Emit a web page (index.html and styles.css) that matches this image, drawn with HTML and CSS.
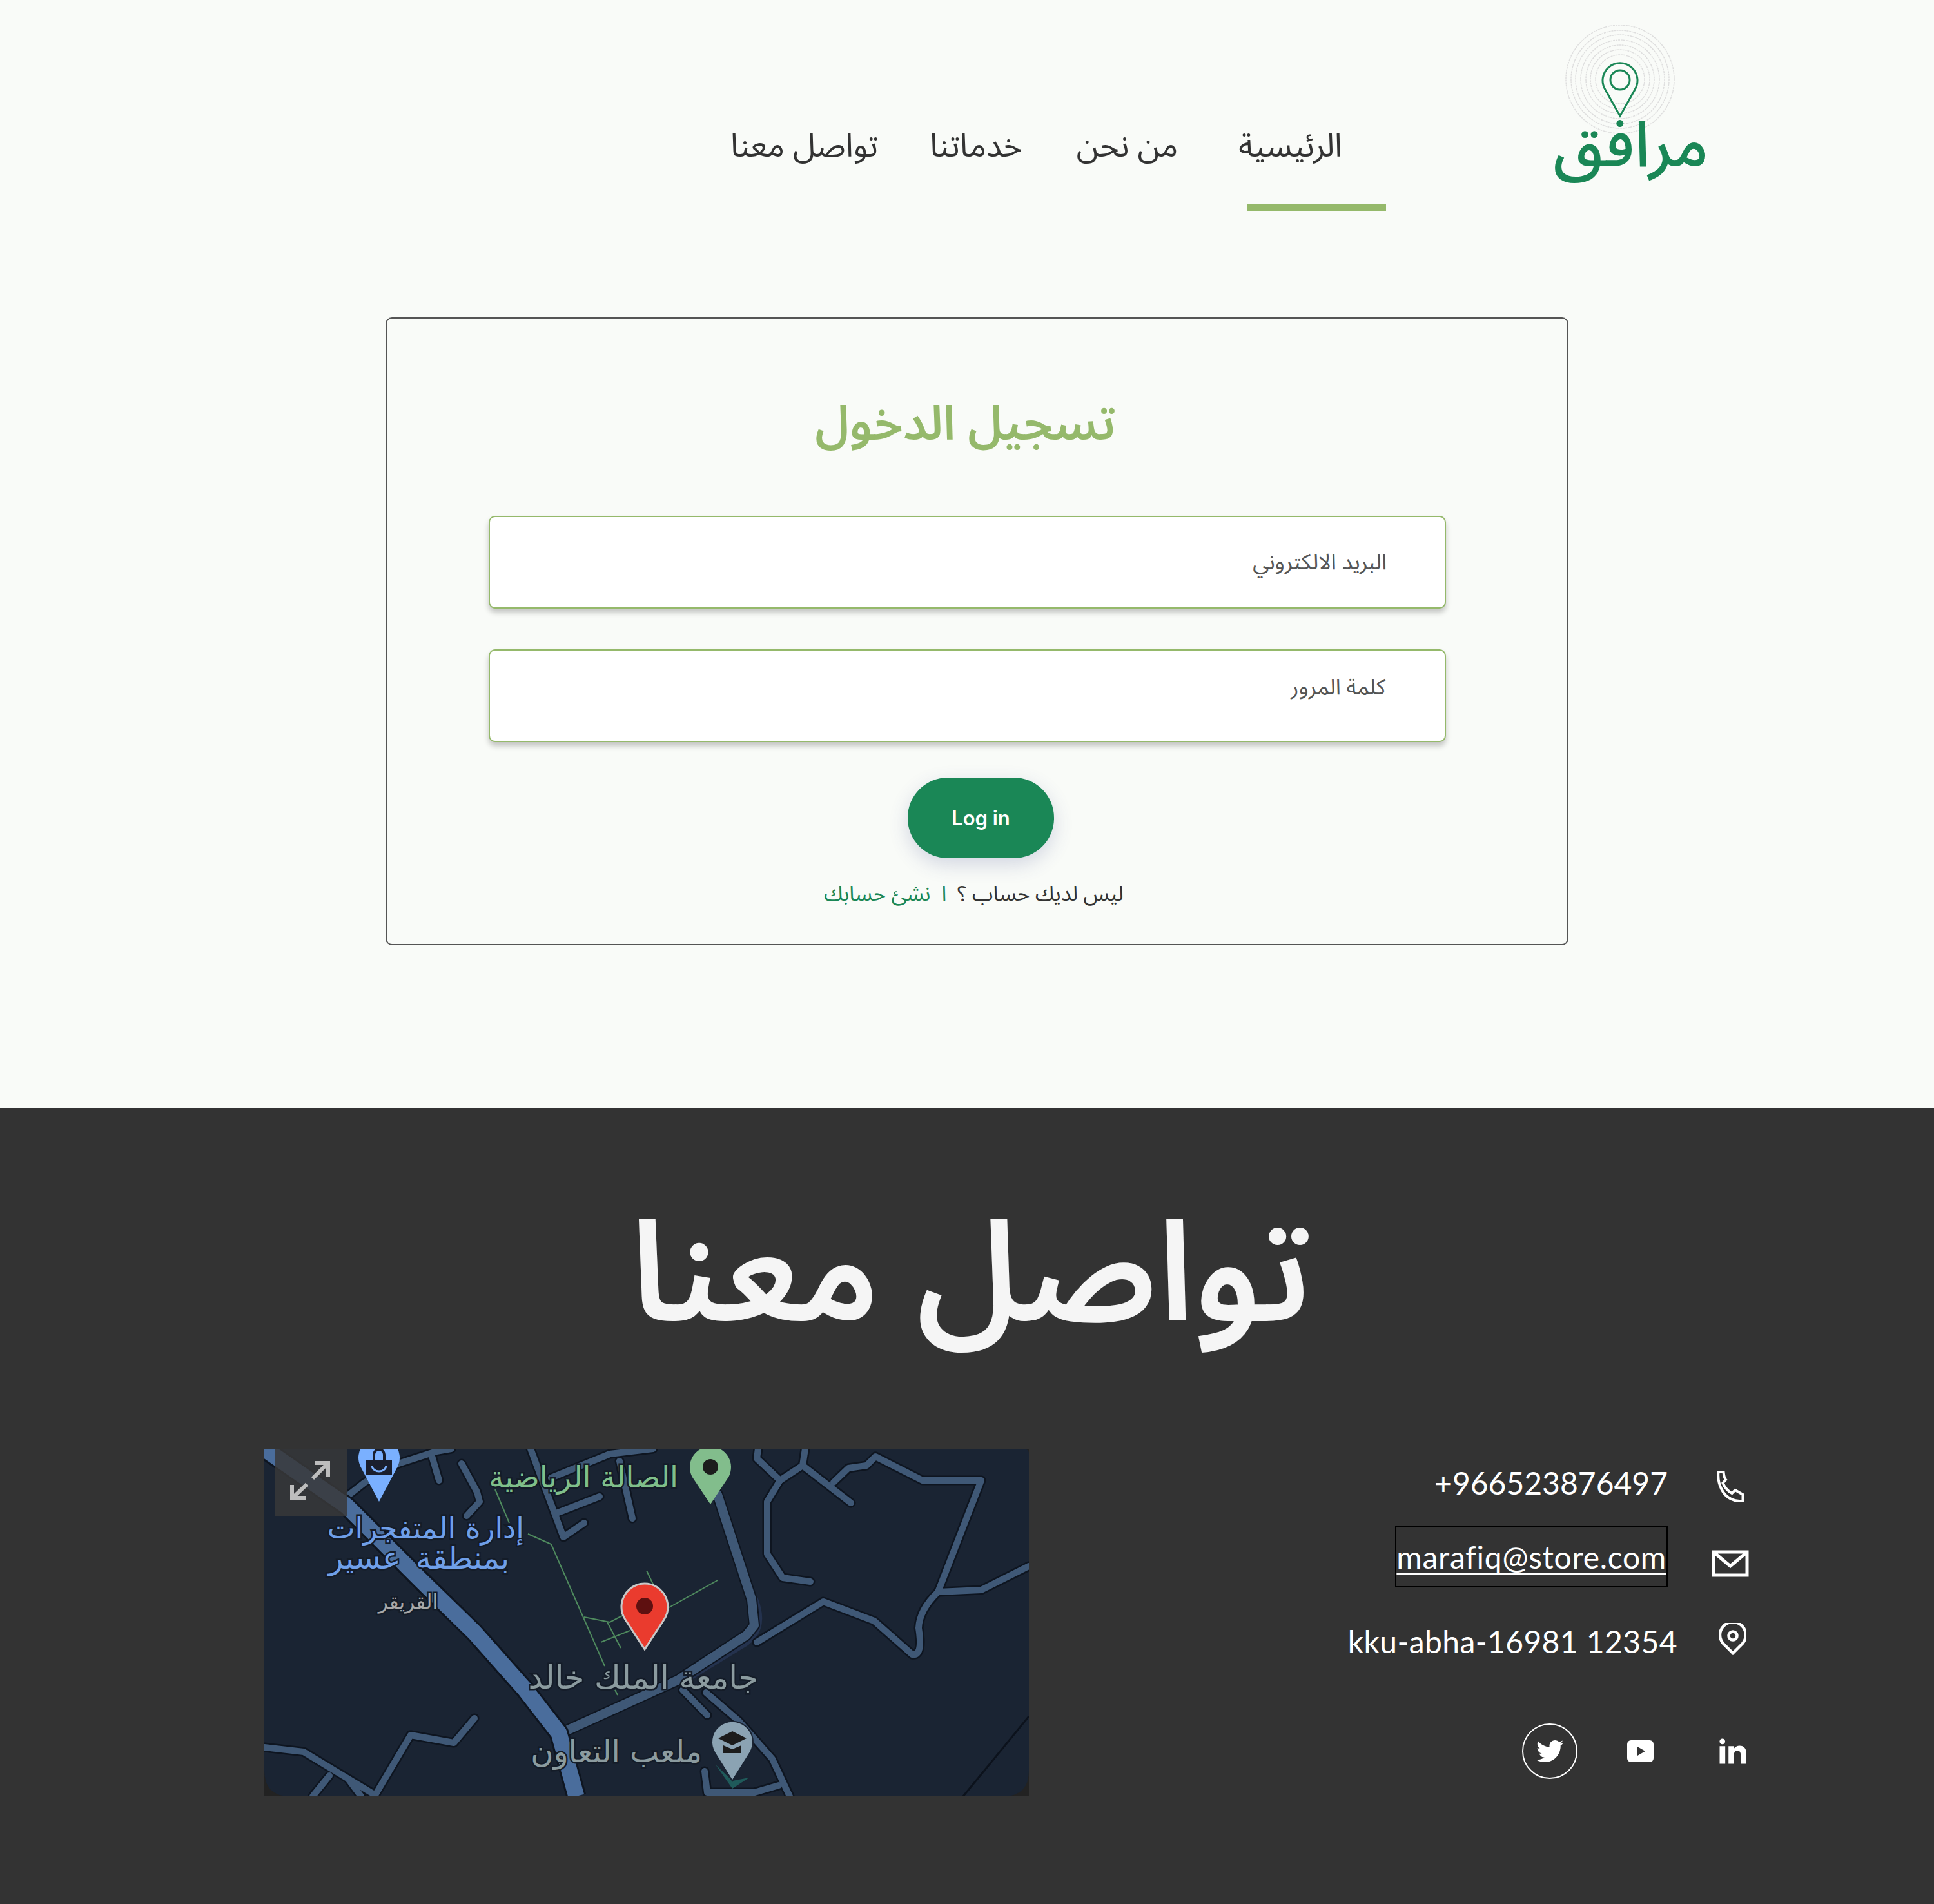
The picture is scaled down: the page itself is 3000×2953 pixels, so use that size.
FILE: index.html
```html
<!DOCTYPE html>
<html lang="ar" dir="rtl">
<head>
<meta charset="utf-8">
<title>مرافق</title>
<link rel="stylesheet" href="styles.css">
</head>
<body>
<header class="site-header">
  <a class="logo" href="#">
    <svg class="logo-mark" viewBox="0 0 170 170" aria-hidden="true">
      <g class="rings">
        <circle cx="85" cy="85" r="84"/><circle cx="85" cy="85" r="76"/><circle cx="85" cy="85" r="69"/>
        <circle cx="85" cy="85" r="61"/><circle cx="85" cy="85" r="53"/><circle cx="85" cy="85" r="46"/>
        <circle cx="85" cy="85" r="38"/>
      </g>
      <path class="pin" d="M85 142 L62 101 A27 27 0 1 1 108 101 Z"/>
      <circle class="pin" cx="85" cy="86" r="15"/>
    </svg>
    <span class="logo-text">مرافق</span>
  </a>
  <nav class="nav">
    <a class="nav-item is-active" href="#">الرئيسية</a>
    <a class="nav-item" href="#">من نحن</a>
    <a class="nav-item" href="#">خدماتنا</a>
    <a class="nav-item" href="#">تواصل معنا</a>
  </nav>
</header>

<main class="main">
  <form class="card">
    <h1 class="card-title">تسجيل الدخول</h1>
    <div class="field"><span class="field-label">البريد الالكتروني</span></div>
    <div class="field field-second"><span class="field-label">كلمة المرور</span></div>
    <button class="btn" type="button" dir="ltr">Log in</button>
    <p class="signup">ليس لديك حساب ؟ &nbsp;<a href="#">ا&nbsp; نشئ حسابك</a></p>
  </form>
</main>

<footer class="footer">
  <h2 class="footer-title">تواصل معنا</h2>
  <div class="footer-body">
    <div class="contact">
      <div class="contact-row">
        <span class="ico-cell"><svg class="ico ico-phone" viewBox="0 0 44 50"><path d="M3 3H11C11.500 8 12 12 14.500 15L10 20C12 26 18 33 24 36L29 31L41 38V48C28 49 15 44 8 30C4 22 2 12 3 3Z"/></svg></span>
        <span class="contact-text contact-phone" dir="ltr">+966523876497</span>
      </div>
      <div class="contact-row">
        <span class="ico-cell"><svg class="ico ico-mail" viewBox="0 0 58 42"><path d="M3 3H55V39H3ZM4 4L29 25L54 4"/></svg></span>
        <a class="contact-text contact-mail" dir="ltr" href="#">marafiq@store.com</a>
      </div>
      <div class="contact-row">
        <span class="ico-cell"><svg class="ico ico-loc" viewBox="0 0 42 50"><path d="M21 47L6 32A20 20 0 1 1 36 32Z"/><circle cx="21" cy="20" r="6.500"/></svg></span>
        <span class="contact-text contact-addr" dir="ltr">kku-abha-16981 12354</span>
      </div>
      <div class="social">
        <svg class="soc soc-in" viewBox="0 0 24 24"><path d="M6.940 5a2 2 0 1 1-4-.002 2 2 0 0 1 4 .002zM7 8.480H3V21h4V8.480zm6.320 0H9.340V21h3.940v-6.570c0-3.660 4.770-4 4.770 0V21H22v-7.930c0-6.170-7.060-5.940-8.720-2.910l.040-1.680z"/></svg>
        <svg class="soc soc-yt" viewBox="0 0 41 34"><path fill-rule="evenodd" d="M6 0H35A6 6 0 0 1 41 6V28A6 6 0 0 1 35 34H6A6 6 0 0 1 0 28V6A6 6 0 0 1 6 0ZM16 10V24L28 17Z"/></svg>
        <span class="soc-circle"><svg class="soc soc-tw" viewBox="0 0 512 512"><path d="M459.370 151.716c.325 4.548.325 9.097.325 13.645 0 138.720-105.583 298.558-298.558 298.558-59.452 0-114.680-17.219-161.137-47.106 8.447.974 16.568 1.299 25.340 1.299 49.055 0 94.213-16.568 130.274-44.832-46.132-.975-84.792-31.188-98.112-72.772 6.498.974 12.995 1.624 19.818 1.624 9.421 0 18.843-1.300 27.614-3.573-48.081-9.747-84.143-51.980-84.143-102.985v-1.299c13.969 7.797 30.214 12.670 47.431 13.319-28.264-18.843-46.781-51.005-46.781-87.391 0-19.492 5.197-37.360 14.294-52.954 51.655 63.675 129.300 105.258 216.365 109.807-1.624-7.797-2.599-15.918-2.599-24.040 0-57.828 46.782-104.934 104.934-104.934 30.213 0 57.502 12.670 76.670 33.137 23.715-4.548 46.456-13.320 66.599-25.340-7.798 23.715-24.366 43.858-46.132 56.853 21.117-2.274 41.584-8.122 60.426-16.243-14.292 20.791-32.161 39.308-52.628 54.253z"/></svg></span>
      </div>
    </div>
    <svg class="map" viewBox="0 0 1186 539" dir="rtl">
      <defs>
        <g id="roads2">
          <path d="M764 300L867 237L946 267L1005 319Q1022 322 1015 278Q1016 250 1045 222L1112 219L1186 182"/>
          <path d="M1045 222L1112 49L1021 49L948 12L934 26L906 30L883 52"/>
          <path d="M766 0L764 15L800 49L780 82L780 163L804 200L847 206"/>
          <path d="M800 49L835 26L910 84M835 26L839 0"/>
          <path d="M649 374L687 413M685 378L736 422L788 481L815 539"/>
          <path d="M683 500L687 533L760 533L798 522M740 539L798 522"/>
          <path d="M128 74L156 52L208 23L267 4L290 0M259 8L271 49"/>
          <path d="M306 23L330 67L334 82L314 104"/>
          <path d="M413 0L464 137L496 115M453 100L520 74"/>
          <path d="M445 45L536 8L603 0M551 19L571 108"/>
          <path d="M0 463L61 470L172 537L227 444L294 456L326 418M101 507L75 539M130 512L150 539"/>
        </g>
        <path id="road-side" d="M703 71L728 148L756 234L760 274L748 289L641 359L460 441"/>
        <path id="road-main" d="M0 0L128 89L243 204L326 285L405 374L457 441L484 539"/>
      </defs>
      <path class="map-bg" d="M8 0H1178Q1186 0 1186 8V499Q1186 539 1146 539H40Q0 539 0 499V8Q0 0 8 0Z"/>
      <path class="map-shade" d="M765 230Q785 280 750 305L660 360L600 385L690 330L760 280Z"/>
      <path class="map-dark" d="M1186 415L1084 539"/>
      <use href="#roads2" class="rd rd-o"/>
      <use href="#roads2" class="rd rd-i"/>
      <use href="#road-side" class="rd rd-so"/>
      <use href="#road-side" class="rd rd-si"/>
      <use href="#road-main" class="rd rd-mo"/>
      <use href="#road-main" class="rd rd-mi"/>
      <path class="map-green" d="M358 63L380 115M409 132L445 148L528 337M496 261L536 269L555 259M532 269L553 309M522 300L567 282M593 189L603 210M628 246L703 204M544 374L548 382"/>

      <text class="mt mt-green" x="642" y="60">الصالة الرياضية</text>
      <text class="mt mt-blue" x="403" y="139">إدارة المتفجرات</text>
      <text class="mt mt-blue mt-blue2" x="380" y="186">بمنطقة عسير</text>
      <text class="mt mt-small" x="269" y="248">القريقر</text>
      <text class="mt mt-grey" x="766" y="372">جامعة الملك خالد</text>
      <text class="mt mt-grey mt-grey2" x="679" y="486">ملعب التعاون</text>

      <path class="pin-blue" d="M178 82L151 31A32 32 0 1 1 205 31Z"/>
      <path class="pin-ink" d="M158 17H198V41H158Z"/>
      <path class="pin-handle" d="M170 17V9A8 8 0 0 1 186 9V17"/>
      <path class="pin-hole" d="M167 26A11 9 0 0 0 189 26"/>
      <path class="pin-green" d="M692 86L664 44A32 32 0 1 1 720 44Z"/>
      <circle class="pin-ink-dot" cx="692" cy="28" r="12"/>
      <path class="pin-red" d="M590 311L560 265A36 36 0 1 1 620 265Z"/>
      <circle class="pin-red-dot" cx="590" cy="244" r="13"/>
      <path class="pin-teal" d="M700 490L726 527L752 510L726 515Z"/>
      <path class="pin-slate" d="M726 515L699 472A32 32 0 1 1 753 472Z"/>
      <path class="pin-ink-dot" d="M704 449L726 438L748 449L726 460ZM712 460L726 466L740 460V472H712Z"/>

      <rect class="expand-bg" x="16" y="0" width="112" height="104"/>
      <path class="expand" d="M75 46L97 24M79 22H99V43M66 55L45 75M65 76H43V56"/>
    </svg>
  </div>
</footer>
</body>
</html>
```
FILE: styles.css
```css
* { box-sizing: border-box; }
html, body { margin: 0; padding: 0; }
body {
  background: #f9fbf8;
  color: #333;
  font-family: "Noto Sans Arabic", "Noto Sans", "Open Sans", sans-serif;
  width: 3000px;
  height: 2953px;
  overflow: hidden;
}
a { color: inherit; text-decoration: none; }

.site-header {
  height: 340px;
  padding: 38px 350px 0 0;
  display: flex;
  align-items: flex-start;
}
.logo { width: 240px; display: flex; flex-direction: column; align-items: center; }
.logo-mark { width: 170px; height: 170px; flex: none; margin-right: 34px; }
.rings circle { fill: none; stroke: #dedede; stroke-width: 1.500; stroke-dasharray: 3 1; }
.pin { fill: none; stroke: #1a8756; stroke-width: 3; }
.logo-text { font-size: 98px; font-weight: 500; line-height: 90px; margin-top: -26px; color: #1a8756; white-space: nowrap; }

.nav { display: flex; gap: 84px; margin-right: 328px; padding-top: 154px; }
.nav-item { position: relative; font-size: 50px; line-height: 70px; color: #333; }
.nav-item.is-active { margin-left: 10px; }
.nav-item:last-child { margin-right: -4px; }
.nav-item.is-active::after {
  content: "";
  position: absolute;
  top: 125px;
  right: -68px;
  width: 215px;
  height: 10px;
  background: #95b96b;
}

.main { height: 1378px; padding: 152px 567px 0 0; }
.card {
  width: 1835px;
  height: 974px;
  border: 2px solid #555;
  border-radius: 10px;
  display: flex;
  flex-direction: column;
  align-items: center;
  padding-top: 100px;
}
.card-title { margin: 0 36px 76px 0; font-size: 74px; line-height: 130px; font-weight: 600; color: #95b96b; }
.field {
  width: 1485px;
  height: 144px;
  background: #fff;
  border: 2px solid #95b96b;
  border-radius: 10px;
  box-shadow: 0 6px 8px rgba(0, 0, 0, .22);
  padding: 34px 90px 0 0;
  font-size: 34px;
  color: #555;
  margin-right: 30px;
}
.field-second { margin-top: 63px; padding: 21px 92px 0 0; }
.btn {
  margin: 55px 0 0 12px;
  width: 227px;
  height: 125px;
  border: 0;
  border-radius: 62px;
  background: #1a8756;
  color: #fff;
  font-family: "Inter", sans-serif;
  font-size: 31px;
  font-weight: 600;
  box-shadow: 0 10px 30px rgba(60, 70, 140, .2);
}
.signup { margin: 26px 10px 0 0; font-size: 32.800px; line-height: 60px; color: #333; }
.signup a { color: #1a8756; }

.footer { height: 1235px; background: #333; overflow: hidden; }
.footer-title { margin: 81px 0 0 12px; text-align: center; font-size: 218px; font-weight: 600; line-height: 360px; color: #f5f5f5; }
.footer-body { display: flex; align-items: flex-start; justify-content: space-between; padding: 86px 287px 0 410px; }
.contact { width: 700px; display: flex; flex-direction: column; }
.contact-row { display: flex; align-items: center; height: 120px; gap: 68px; }
.ico-cell { width: 58px; flex: none; display: flex; justify-content: center; align-items: center; }
.contact-text { font-family: "Lato", sans-serif; font-weight: 400; font-size: 48px; color: #fff; }
.contact-phone { margin-bottom: 12px; }
.contact-mail { border: 2px solid #000; text-decoration: underline; text-decoration-thickness: 3px; text-decoration-skip-ink: none; text-underline-offset: 7px; padding: 17px 0; margin-bottom: 22px; letter-spacing: .7px; }
.contact-addr { margin-right: -15px; letter-spacing: .4px; }
.ico { flex: none; fill: none; stroke: #fff; stroke-width: 4; }
.ico-phone { width: 47px; height: 50px; }
.ico-mail { width: 58px; height: 42px; stroke-width: 5; }
.ico-loc { width: 42px; height: 50px; stroke-width: 4.500; margin: 0 -8px 6px 0; }
.social { display: flex; align-items: center; gap: 77px; margin-top: 68px; }
.soc { fill: #fff; flex: none; }
.soc-in { width: 52px; height: 52px; margin-left: 19px; }
.soc-yt { width: 41px; height: 34px; }
.soc-tw { width: 42px; height: 42px; }
.soc-circle { width: 86px; height: 86px; border: 2px solid #fff; border-radius: 50%; display: flex; align-items: center; justify-content: center; }

.map { width: 1186px; height: 539px; flex: none; background: #222; margin-top: 2px; }
.map-bg { fill: #1a2433; }
.map-shade { fill: #24324e; }
.map-dark { stroke: #0c121c; stroke-width: 3; fill: none; }
.rd { fill: none; stroke-linecap: round; stroke-linejoin: round; }
.rd-o { stroke: #0e1520; stroke-width: 15; }
.rd-i { stroke: #3f5876; stroke-width: 10; }
.rd-so { stroke: #0e1520; stroke-width: 18; }
.rd-si { stroke: #3f5876; stroke-width: 14; }
.rd-mo { stroke: #0e1520; stroke-width: 31; stroke-linecap: butt; }
.rd-mi { stroke: #4a6d9c; stroke-width: 25; stroke-linecap: butt; }
.map-green { fill: none; stroke: #4f8a5e; stroke-width: 2; }
.mt { font-family: "DejaVu Sans", sans-serif; text-anchor: start; paint-order: stroke; stroke: #141c28; stroke-width: 5; }
.mt-green { font-size: 46.500px; fill: #7fbf8a; }
.mt-blue { font-size: 45.500px; fill: #6f9fe8; }
.mt-blue2 { font-size: 48px; word-spacing: 8px; }
.mt-small { font-size: 31px; fill: #a8a8a8; }
.mt-grey { font-size: 49.500px; fill: #8b9b9f; }
.mt-grey2 { font-size: 48px; }
.pin-blue { fill: #7ab0ff; }
.pin-ink { fill: #1a1f2e; }
.pin-handle { fill: none; stroke: #1a1f2e; stroke-width: 4; }
.pin-hole { fill: none; stroke: #7ab0ff; stroke-width: 3; }
.pin-green { fill: #82bd8c; }
.pin-ink-dot { fill: #1c1c1c; }
.pin-red { fill: #ea3b2e; stroke: #c8c8c8; stroke-width: 3; }
.pin-red-dot { fill: #5e1010; }
.pin-teal { fill: #1f5a5a; }
.pin-slate { fill: #8ba3b3; stroke: #1a2433; stroke-width: 2; }
.expand-bg { fill: #38383a; fill-opacity: .85; }
.expand { fill: none; stroke: #bdbdbd; stroke-width: 6; }
```
